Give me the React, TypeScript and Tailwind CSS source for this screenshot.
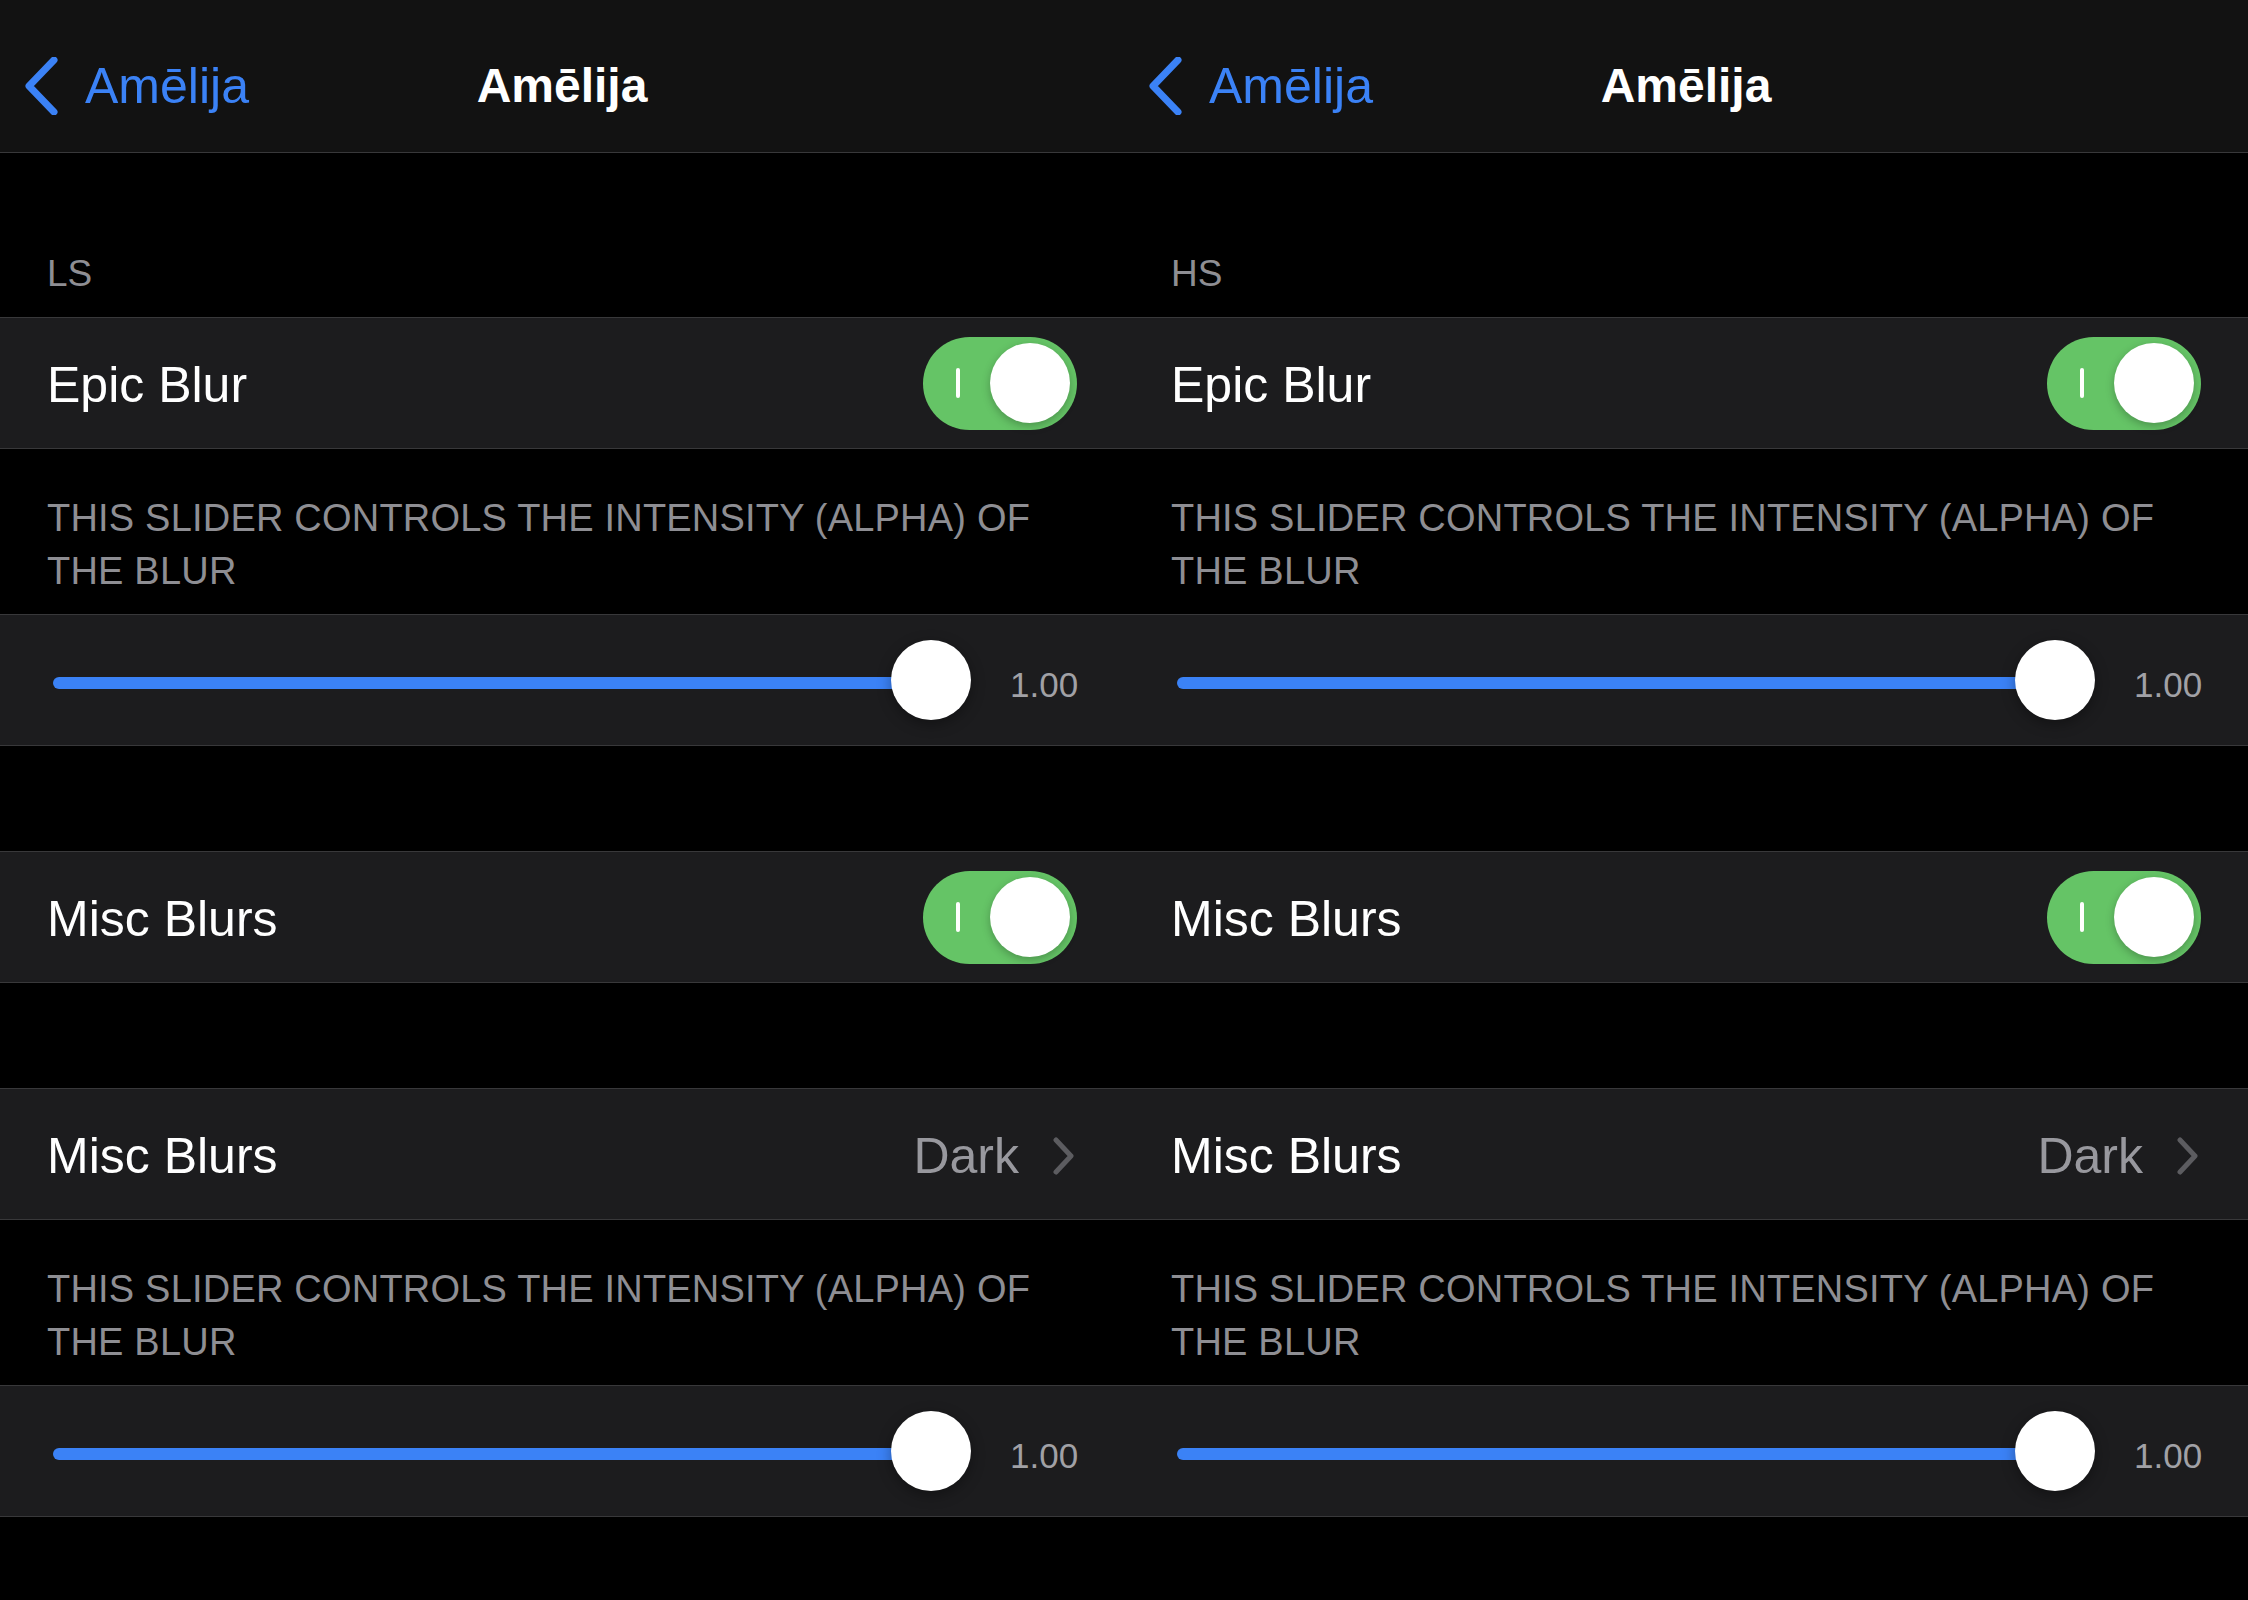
const BackChevron = () => (
  <svg width="36" height="58" viewBox="0 0 36 58" fill="none" className="shrink-0">
    <path d="M32 3 L7 29 L32 55" stroke="#3b82f6" strokeWidth="7" strokeLinecap="round" strokeLinejoin="round" />
  </svg>
);

const RowChevron = () => (
  <svg width="22" height="38" viewBox="0 0 22 38" fill="none" className="shrink-0">
    <path d="M3 3 L18 19 L3 35" stroke="#5c5c60" strokeWidth="5" strokeLinecap="round" strokeLinejoin="round" />
  </svg>
);

const Toggle = () => (
  <div className="flex h-[93px] w-[154px] shrink-0 items-center justify-between rounded-full bg-[#65c466] pl-[33px] pr-[7px]">
    <div className="h-[30px] w-[4px] rounded-full bg-white" />
    <div className="h-[80px] w-[80px] rounded-full bg-white shadow-[0_3px_8px_rgba(0,0,0,0.25)]" />
  </div>
);

const Slider = ({ value }: { value: string }) => (
  <div className="flex h-[130px] items-center pl-[53px]">
    <div className="flex w-[918px] items-center">
      <div className="mt-[6px] h-[12px] w-full rounded-full bg-[#3b82f6]" />
      <div className="-ml-[40px] h-[80px] w-[80px] shrink-0 rounded-full bg-white shadow-[0_4px_14px_rgba(0,0,0,0.35)]" />
    </div>
    <div className="ml-[39px] mt-[8px] w-[70px] whitespace-nowrap text-[35px] font-medium leading-none text-[#a1a1a6]">
      {value}
    </div>
  </div>
);

const Description = () => (
  <div className="px-[47px] pt-[43px] pb-[16px] text-[38px] leading-[53px] tracking-[0.2px] text-[#8e8e93]">
    THIS SLIDER CONTROLS THE INTENSITY (ALPHA) OF THE BLUR
  </div>
);

const Label = ({ children }: { children: string }) => (
  <span className="pt-[4px] text-[50px] leading-none text-white">{children}</span>
);

const Panel = ({ section }: { section: string }) => (
  <div className="flex-1">
    <div className="grid h-[153px] grid-cols-[1fr_auto_1fr] items-center border-b border-[#38383a] bg-[#121212] pt-[20px]">
      <div className="flex items-center gap-[27px] pl-[22px]">
        <BackChevron />
        <span className="text-[50px] leading-none text-[#3b82f6]">Amēlija</span>
      </div>
      <div className="text-[48px] font-bold leading-none text-white">Amēlija</div>
      <div />
    </div>

    <div className="flex h-[164px] items-end px-[47px] pb-[25px] text-[37px] leading-none text-[#8e8e93]">
      {section}
    </div>

    <div className="border-y border-[#38383a] bg-[#1c1c1e]">
      <div className="flex h-[130px] items-center justify-between px-[47px]">
        <Label>Epic Blur</Label>
        <Toggle />
      </div>
    </div>

    <Description />

    <div className="border-y border-[#38383a] bg-[#1c1c1e]">
      <Slider value="1.00" />
    </div>

    <div className="h-[105px]" />

    <div className="border-y border-[#38383a] bg-[#1c1c1e]">
      <div className="flex h-[130px] items-center justify-between px-[47px]">
        <Label>Misc Blurs</Label>
        <Toggle />
      </div>
    </div>

    <div className="h-[105px]" />

    <div className="border-y border-[#38383a] bg-[#1c1c1e]">
      <div className="flex h-[130px] items-center justify-between pl-[47px] pr-[49px]">
        <Label>Misc Blurs</Label>
        <div className="flex items-center gap-[34px] pt-[4px]">
          <span className="text-[50px] leading-none text-[#98989e]">Dark</span>
          <RowChevron />
        </div>
      </div>
    </div>

    <Description />

    <div className="border-y border-[#38383a] bg-[#1c1c1e]">
      <Slider value="1.00" />
    </div>
  </div>
);

export default function App() {
  return (
    <div className="flex min-h-screen bg-black font-['Liberation_Sans',sans-serif]">
      <Panel section="LS" />
      <Panel section="HS" />
    </div>
  );
}
